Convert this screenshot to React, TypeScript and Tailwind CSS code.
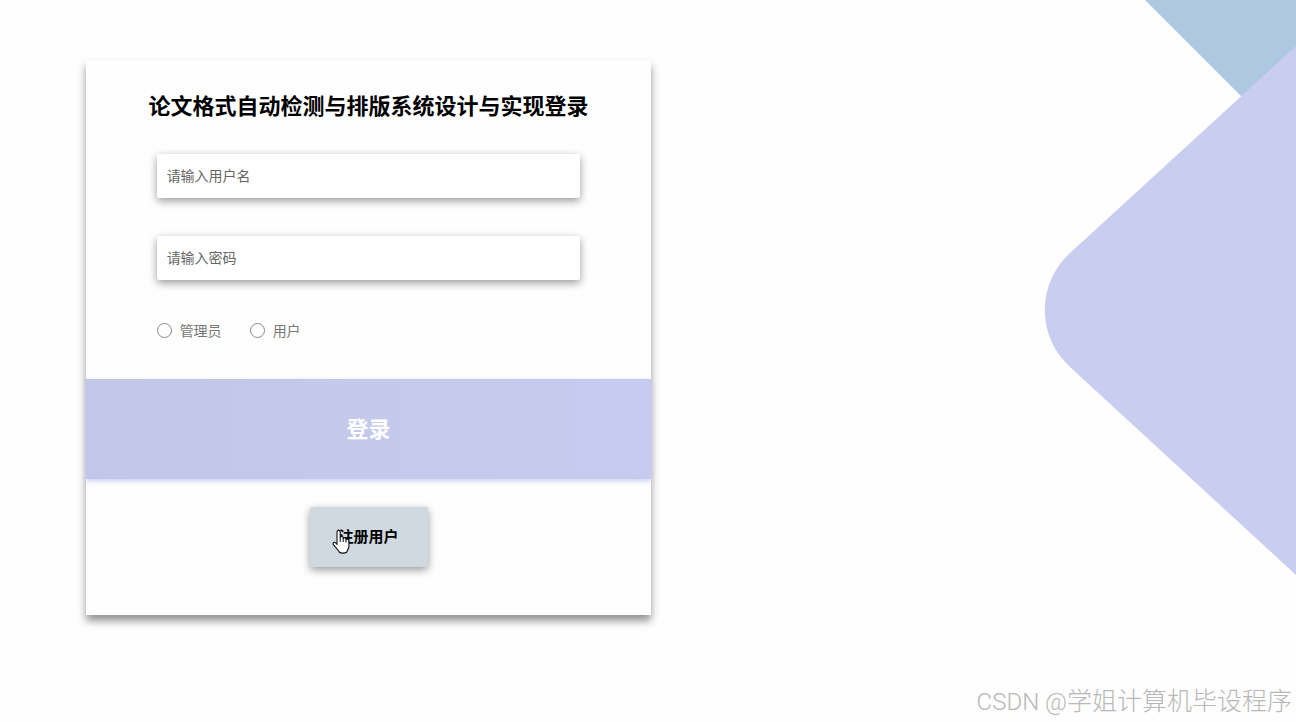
import React, { useState } from 'react';

type Role = 'admin' | 'user';

const roles: { value: Role; label: string }[] = [
  { value: 'admin', label: '管理员' },
  { value: 'user', label: '用户' },
];

type FieldProps = {
  type: 'text' | 'password';
  label: string;
  value: string;
  onChange: (next: string) => void;
};

const Field: React.FC<FieldProps> = ({ type, label, value, onChange }) => (
  <input
    type={type}
    aria-label={label}
    placeholder={label}
    value={value}
    onChange={(e) => onChange(e.target.value)}
    className="h-11 w-full rounded-xs bg-white px-2.5 pb-0.5 text-sm text-gray-800 shadow-[0_3px_8px_rgba(0,0,0,0.4)] outline-none placeholder:text-[#666]"
  />
);

// Rounded diamonds in the top right corner
const Backdrop: React.FC = () => (
  <svg
    aria-hidden="true"
    viewBox="0 0 256 580"
    className="pointer-events-none absolute top-0 right-0 h-[580px] w-64"
  >
    <path d="M105 0 L201 96 L256 96 V0 Z" fill="#aec8e2" />
    <path d="M256 46 L30 253 A77 77 0 0 0 30 367 L256 575 Z" fill="#c9cef1" />
  </svg>
);

const HandCursor: React.FC = () => (
  <svg
    aria-hidden="true"
    viewBox="0 0 18 25"
    className="pointer-events-none absolute top-[22px] left-[22px] h-[25px] w-[18px]"
  >
    <path
      d="M5 15.5V3.2C5 .4 8.2.4 8.2 3.2V8.6C8.4 6.8 11.2 7 11.2 9V9.6C11.6 8 14 8.4 14 10.2V10.8C14.6 9.6 16.9 9.9 16.9 12V17.2C16.9 20 15.2 21 14.8 23C13.2 24.5 8.6 24.5 7.2 23C6.4 20.6 3.6 18.8 1.4 15.6C.2 13.8 2.4 12.4 3.8 14Z"
      fill="#fff"
      stroke="#111"
      strokeWidth="1.1"
      strokeLinejoin="round"
    />
    <path d="M8.2 8.6V13M11.2 9.6V13M14 10.8V13.5" fill="none" stroke="#111" />
  </svg>
);

const App: React.FC = () => {
  const [username, setUsername] = useState('');
  const [password, setPassword] = useState('');
  const [role, setRole] = useState<Role | null>(null);

  return (
    <div className="relative min-h-screen overflow-hidden bg-[#fefefe] px-[86px] py-[60px] font-['Noto_Sans_CJK_SC',sans-serif]">
      <Backdrop />

      <form
        onSubmit={(e) => e.preventDefault()}
        className="relative flex w-full max-w-[565px] flex-col items-center bg-[#fefefe] pt-7 pb-12 shadow-[0_6px_8px_rgba(0,0,0,0.42)]"
      >
        <h1 className="text-center text-[22px] leading-8 font-bold whitespace-nowrap text-black">
          论文格式自动检测与排版系统设计与实现登录
        </h1>

        <div className="mt-[34px] flex w-3/4 flex-col gap-[38px]">
          <Field
            type="text"
            label="请输入用户名"
            value={username}
            onChange={setUsername}
          />
          <Field
            type="password"
            label="请输入密码"
            value={password}
            onChange={setPassword}
          />

          <div className="flex h-6 items-center gap-7">
            {roles.map((item) => (
              <label
                key={item.value}
                className="flex items-center gap-2 text-sm text-[#777]"
              >
                <input
                  type="radio"
                  name="role"
                  value={item.value}
                  checked={role === item.value}
                  onChange={() => setRole(item.value)}
                  className="size-[15px] appearance-none rounded-full border border-[#888] bg-white checked:border-4 checked:border-[#8f97dc]"
                />
                {item.label}
              </label>
            ))}
          </div>
        </div>

        <button
          type="submit"
          className="mt-[37px] h-[100px] w-full bg-linear-to-r from-[#c2c7e9] to-[#c7cbef] pb-1 text-[22px] font-bold text-white shadow-[0_2px_5px_#c9cef1]"
        >
          登录
        </button>

        <div className="relative mt-7">
          <button
            type="button"
            className="h-[60px] w-[118px] rounded-xs bg-[#cfd9df] pb-0.5 text-[15px] font-bold text-black shadow-[0_3px_8px_rgba(0,0,0,0.4)]"
          >
            注册用户
          </button>
          <HandCursor />
        </div>
      </form>

      <p className="absolute right-1 bottom-1 flex items-baseline text-[25px] leading-9 font-light whitespace-nowrap text-[#b8b8b8]">
        <span className="font-['Roboto',sans-serif] text-2xl font-light">
          CSDN @
        </span>
        学姐计算机毕设程序
      </p>
    </div>
  );
};

export default App;
